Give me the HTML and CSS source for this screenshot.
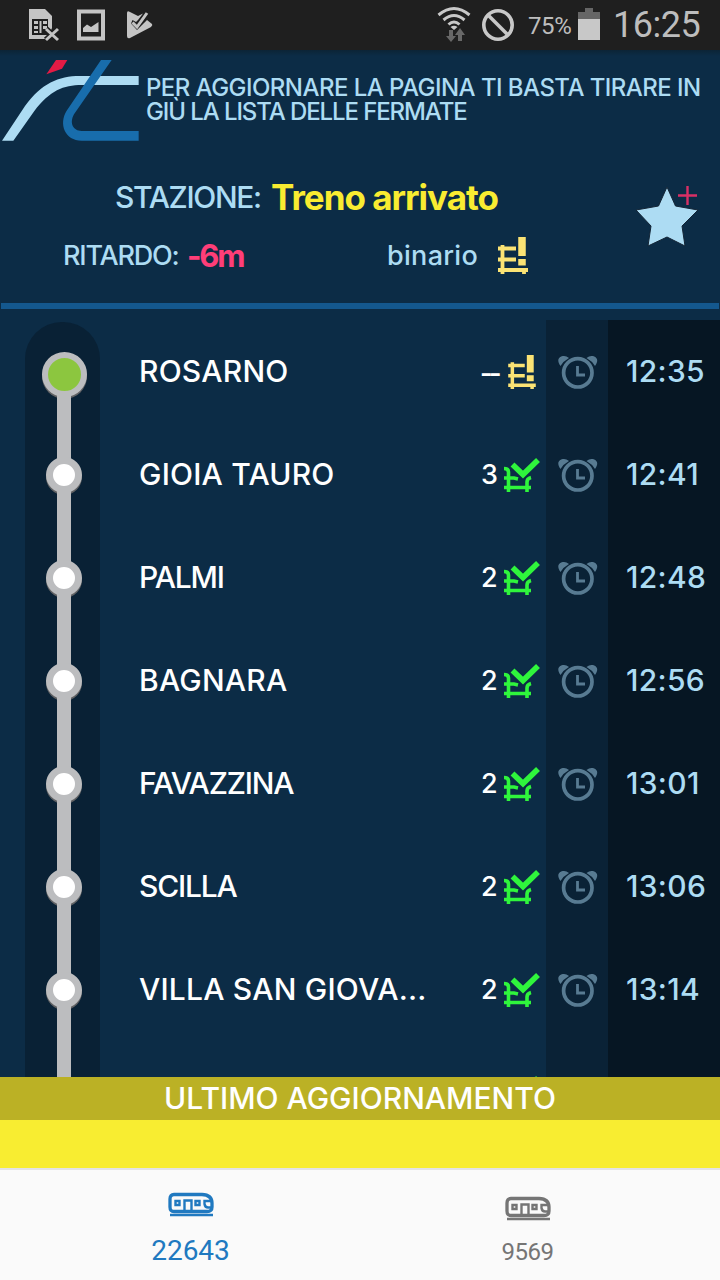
FILE: index.html
```html
<!DOCTYPE html>
<html lang="it">
<head>
  <meta charset="UTF-8" />
  <meta name="viewport" content="width=device-width, initial-scale=1.0"/>
  <title>Treno 22643</title>
  <link rel="stylesheet" href="styles.css">
</head>
<body>
  <!-- shared icons -->
  <svg width="0" height="0" class="symbols">
    <symbol id="track-ok" viewBox="0 0 36 36">
      <g fill="none" stroke="#2ff53c">
        <path stroke-width="3.600" d="M0 11.500 Q4.500 11.500 4.500 15 V35 M0 21 H10 L14 22 M0 30.500 H27 M23 35 V25 Q23 21.500 27 20.500"/>
        <path stroke-width="5.600" d="M8.500 7.500 L19 17.500 L34 3"/>
      </g>
    </symbol>
    <symbol id="track-warn" viewBox="0 0 30 37">
      <g fill="none" stroke="#fbe374" stroke-width="3.800">
        <path d="M4.500 8 V37 M0 11.500 H18 M0 22.500 H18 M0 33 H30 M26 33 V37"/>
        <path stroke-width="7.500" d="M24 0 V19 M24 22 V28.500"/>
      </g>
    </symbol>
    <symbol id="alarm" viewBox="0 0 40 34">
      <g fill="none" stroke="#587b92" stroke-width="3.700">
        <circle cx="19.800" cy="17.800" r="14.200"/>
        <path stroke-width="2.800" d="M19.500 11 V20 H27"/>
      </g>
      <path fill="#587b92" d="M2.500 11 C-2 5 1 1 6 1 Q8.500 1 11 3 Q5.500 6 2.500 11Z M37 11 C41.500 5 38.500 1 33.500 1 Q31 1 28.500 3 Q34 6 37 11Z"/>
    </symbol>
    <symbol id="train" viewBox="0 0 46 25">
      <g fill="none" stroke="currentColor">
        <path stroke-width="3.300" d="M6 2.500 H34 Q44 3 44 11 V15 Q44 19.500 39 19.500 H6 Q2 19.500 2 15 V7 Q2 2.500 6 2.500Z"/>
        <path stroke-width="2.300" d="M2 23 H45"/>
        <path stroke-width="2.400" d="M7.500 9 H11.500 V13 H7.500Z M16.500 19 V8.500 H23.500 V19 M27.500 9 H31.500 V13 H27.500Z M43 9 H36.500 V12 Q37 15.500 40 15.500 H43"/>
      </g>
    </symbol>
  </svg>

  <div class="status-bar">
    <svg class="status-left" width="160" height="50" viewBox="0 0 160 50">
      <path fill="#c4c4c4" d="M29 9 H45 L52 16 V28 L47 39 H29Z"/>
      <path fill="#1f1f1f" d="M32 19 H48 V35 H32Z"/>
      <path fill="#c4c4c4" d="M34 21 H38 V24 H34Z M34 26 H38 V29 H34Z M34 31 H38 V33 H34Z M39.500 21 H41.500 V33 H39.500Z M43 21 H47 V24 H43Z M43 26 H47 V29 H43Z"/>
      <path fill="none" stroke="#1f1f1f" stroke-width="6" d="M46 29 L58 40 M58 29 L46 40"/>
      <path fill="none" stroke="#c4c4c4" stroke-width="3" d="M46 29 L58 40 M58 29 L46 40"/>
      <path fill="none" stroke="#c4c4c4" stroke-width="4" d="M79 11.500 H103 V38.500 H79Z"/>
      <path fill="#c4c4c4" d="M83 32 V28 L87 24.500 L91 27 L98.500 22 V32Z"/>
      <path fill="#c4c4c4" d="M127 13 Q127 10 130 12 L138 16 L143 13.500 L138 20 L136 22 L132.500 20 L131 23.500 L137 30 L147 20 L152 24 Q153 25 151 27 L130 38 Q127 39 127 36Z"/>
      <path fill="none" stroke="#c4c4c4" stroke-width="3" d="M132.500 22.500 L137 27 L147 13"/>
    </svg>
    <svg class="status-net" width="80" height="50" viewBox="0 0 80 50">
      <g fill="none" stroke="#c8c8c8" stroke-width="3">
        <path d="M1.500 15 Q17 2 32.500 15 M6.500 20 Q17 11 27.500 20 M11.500 24.500 Q17 19.500 22.500 24.500"/>
        <circle cx="61" cy="25" r="14.200" stroke-width="3.600"/>
        <path stroke-width="3.600" d="M51 15 L71 35"/>
      </g>
      <path fill="#c8c8c8" d="M13.500 27 Q17 24.500 20.500 27 L17 30Z"/>
      <path fill="#686868" d="M12 30 H16 V36 H19 L14 42 L9 36 H12Z M21 41 V35 H18 L23 28 L28 35 H25 V41Z"/>
    </svg>
    <span class="percent">75%</span>
    <svg class="battery" width="22" height="34" viewBox="0 0 22 34">
      <path fill="#666" d="M7 0 H15 V4 H22 V11 H0 V4 H7Z"/>
      <path fill="#c8c8c8" d="M0 11 H22 V32 H0Z"/>
    </svg>
    <span class="clock">16:25</span>
  </div>

  <div class="header">
    <div class="hint">
      <svg class="logo" width="140" height="90" viewBox="0 0 420 270">
        <path fill="#e31b45" d="M168 0 H202 L186 26 L139 43Z"/>
        <path fill="#addcf3" d="M6 242 L75 138 C125 70 175 48 240 48 H416 V75 H245 C190 75 150 92 103 153 L40 242Z"/>
        <path fill="#186dac" d="M303 0 H335 L222 163 C207 190 220 213 245 213 H416 V242 H245 C195 242 175 192 200 152Z"/>
      </svg>
      <div class="hint-text">
        <p>PER AGGIORNARE LA PAGINA TI BASTA TIRARE IN</p>
        <p class="tight">GIÙ LA LISTA DELLE FERMATE</p>
      </div>
    </div>
    <div class="info">
      <div class="info-text">
        <div class="station"><span class="station-label">STAZIONE:</span><strong>Treno arrivato</strong></div>
        <div class="delay">
          <span class="delay-label">RITARDO:</span><strong>-6m</strong>
          <span class="platform">binario</span>
          <svg width="32" height="37"><use href="#track-warn"/></svg>
        </div>
      </div>
      <svg class="star" width="64" height="66" viewBox="0 0 64 66">
        <path fill="#addcf3" stroke="#142536" stroke-width="1" d="M31 4 L39.500 23 L62 27 L46 43 L49 63 L31 54 L12 63 L15 43 L0 27 L22.500 23Z"/>
        <path fill="none" stroke="#d92f65" stroke-width="2.400" d="M42 12.500 H61 M51.500 3 V22"/>
      </svg>
    </div>
  </div>

  <div class="stops">
    <div class="rail"></div>
    <div class="stop first">
      <span class="dot"></span><span class="name">ROSARNO</span><span class="track none">--</span>
      <svg class="track-icon warn"><use href="#track-warn"/></svg>
      <div class="alarm"><svg><use href="#alarm"/></svg></div><span class="time">12:35</span>
    </div>
    <div class="stop">
      <span class="dot"></span><span class="name">GIOIA TAURO</span><span class="track">3</span>
      <svg class="track-icon"><use href="#track-ok"/></svg>
      <div class="alarm"><svg><use href="#alarm"/></svg></div><span class="time">12:41</span>
    </div>
    <div class="stop">
      <span class="dot"></span><span class="name tight">PALMI</span><span class="track">2</span>
      <svg class="track-icon"><use href="#track-ok"/></svg>
      <div class="alarm"><svg><use href="#alarm"/></svg></div><span class="time">12:48</span>
    </div>
    <div class="stop">
      <span class="dot"></span><span class="name">BAGNARA</span><span class="track">2</span>
      <svg class="track-icon"><use href="#track-ok"/></svg>
      <div class="alarm"><svg><use href="#alarm"/></svg></div><span class="time">12:56</span>
    </div>
    <div class="stop">
      <span class="dot"></span><span class="name tight">FAVAZZINA</span><span class="track">2</span>
      <svg class="track-icon"><use href="#track-ok"/></svg>
      <div class="alarm"><svg><use href="#alarm"/></svg></div><span class="time">13:01</span>
    </div>
    <div class="stop">
      <span class="dot"></span><span class="name tight">SCILLA</span><span class="track">2</span>
      <svg class="track-icon"><use href="#track-ok"/></svg>
      <div class="alarm"><svg><use href="#alarm"/></svg></div><span class="time">13:06</span>
    </div>
    <div class="stop">
      <span class="dot"></span><span class="name">VILLA SAN GIOVA...</span><span class="track">2</span>
      <svg class="track-icon"><use href="#track-ok"/></svg>
      <div class="alarm"><svg><use href="#alarm"/></svg></div><span class="time">13:14</span>
    </div>
    <div class="stop">
      <span></span><span></span><span></span>
      <svg class="track-icon"><use href="#track-ok"/></svg>
      <div class="alarm"></div><span class="time"></span>
    </div>
  </div>

  <div class="update">ULTIMO AGGIORNAMENTO</div>
  <div class="update-time"></div>

  <div class="tabs">
    <div class="tab active">
      <svg width="46" height="25"><use href="#train"/></svg>
      <span>22643</span>
    </div>
    <div class="tab">
      <svg width="46" height="25"><use href="#train"/></svg>
      <span>9569</span>
    </div>
  </div>
</body>
</html>
```
FILE: styles.css
```css
* {
  box-sizing: border-box;
}
body {
  margin: 0;
  width: 720px;
  height: 1280px;
  overflow: hidden;
  display: flex;
  flex-direction: column;
  background: #0c2c46;
  color: #addcf3;
  font-family: Inter, "Liberation Sans", sans-serif;
  font-weight: 500;
}
svg {
  display: block;
  flex: none;
}
.symbols {
  position: absolute;
}

/* status bar */
.status-bar {
  height: 50px;
  flex: none;
  display: flex;
  align-items: center;
  background: #1f1f1f;
  color: #bdbdbd;
  font-family: Roboto, sans-serif;
}
.status-net {
  margin-left: 277px;
}
.percent {
  margin: 2px 0 0 11px;
  width: 50px;
  font-size: 24px;
  font-weight: 400;
  letter-spacing: -0.4px;
}
.clock {
  margin-left: 13px;
  font-size: 36px;
  font-weight: 400;
  line-height: 50px;
  letter-spacing: -0.5px;
}

/* header */
.header {
  height: 270px;
  flex: none;
  background: linear-gradient(#0c2436, #0c2c46 6px);
}
.hint {
  height: 125px;
  padding-top: 10px;
  display: flex;
}
.hint-text {
  margin: 16px 0 0 6px;
  font-size: 24px;
  line-height: 24px;
  letter-spacing: -0.55px;
  white-space: nowrap;
}
.hint-text p {
  margin: 0;
}
.hint-text .tight {
  letter-spacing: -1.1px;
}
.info {
  height: 134px;
  display: flex;
  border-bottom: 6px solid #14588e;
  margin: 0 1px;
}
.info-text {
  width: 635px;
}
.station {
  height: 47px;
  padding: 0 0 3px 114px;
  display: flex;
  align-items: center;
  line-height: 44px;
  font-size: 30px;
}
.station-label {
  width: 156px;
  letter-spacing: -1.35px;
}
.station strong {
  color: #f9ec31;
  font-size: 35px;
  letter-spacing: -1px;
}
.delay {
  height: 66px;
  padding-left: 62px;
  display: flex;
  align-items: center;
  font-size: 27px;
}
.delay-label {
  width: 124px;
  letter-spacing: -1.2px;
}
.delay strong {
  width: 200px;
  color: #ff3e78;
  font-size: 31px;
  letter-spacing: -2.2px;
}
.platform {
  width: 110px;
  letter-spacing: 0.3px;
}
.star {
  margin-top: 8px;
}

/* stops */
.stops {
  position: relative;
  height: 757px;
  flex: none;
  overflow: hidden;
}
.rail {
  position: absolute;
  left: 25px;
  top: 2px;
  width: 75px;
  height: 755px;
  background: #092135;
  border-radius: 37px 37px 0 0;
}
.rail::after {
  content: "";
  position: absolute;
  left: 32px;
  top: 60px;
  bottom: 0;
  width: 14px;
  background: #bcbdbf;
}
.stop {
  position: relative;
  height: 103px;
  display: grid;
  grid-template-columns: 139px 342px 22px 43px 62px 112px;
  align-items: center;
  color: #fff;
  font-size: 30px;
}
.dot {
  justify-self: start;
  margin-left: 46px;
  width: 36px;
  height: 36px;
  border: 7.5px solid #bcbdbf;
  border-radius: 50%;
  background: #fff;
  box-shadow: 0 2px #626365;
}
.first .dot {
  margin: 5px 0 0 42px;
  width: 45px;
  height: 45px;
  border-width: 6px;
  background: #8cc63f;
}
/* keeps the rail on top of the dot shadow */
.dot::after {
  content: "";
  position: absolute;
  left: 57px;
  top: 68px;
  width: 14px;
  height: 8px;
  background: #bcbdbf;
}
.first .dot::after {
  top: 75px;
}
.name {
  padding-bottom: 2px;
  letter-spacing: 0.2px;
  white-space: nowrap;
}
.name.tight {
  letter-spacing: -1.2px;
}
.track {
  font-size: 27px;
  white-space: nowrap;
}
.track.none {
  padding-top: 3px;
  margin-left: -1px;
  font-weight: 600;
  letter-spacing: -3.5px;
}
.track-icon {
  width: 36px;
  height: 36px;
  margin-left: 1px;
}
.track-icon.warn {
  width: 28px;
  height: 34px;
  margin-left: 5px;
}
.alarm {
  height: 103px;
  padding-left: 1px;
  display: flex;
  align-items: center;
  justify-content: center;
  background: #0a2236;
}
.alarm svg {
  width: 40px;
  height: 34px;
}
.time {
  height: 103px;
  padding-left: 18px;
  background: #061623;
  color: #addcf3;
  line-height: 103px;
  letter-spacing: 0.3px;
}

/* last update */
.update {
  height: 43px;
  flex: none;
  background: #bbb125;
  color: #fff;
  font-size: 30px;
  line-height: 43px;
  text-align: center;
}
.update-time {
  height: 48px;
  flex: none;
  background: #f8ed31;
}

/* tabs */
.tabs {
  flex: 1;
  display: flex;
  padding: 0 24px 0 22px;
  border-top: 2px solid #e3e3e5;
  background: #fafafa;
  font-family: Roboto, sans-serif;
  font-weight: 400;
}
.tab {
  flex: 1;
  display: flex;
  flex-direction: column;
  align-items: center;
  padding-top: 26px;
  color: #757575;
  font-size: 24px;
}
.tab span {
  margin-top: 17px;
  line-height: 28px;
  letter-spacing: -0.5px;
}
.tab.active {
  padding-top: 22px;
  color: #2079c0;
  font-size: 28px;
}
.tab.active span {
  margin-top: 20px;
  letter-spacing: 0;
}
```
